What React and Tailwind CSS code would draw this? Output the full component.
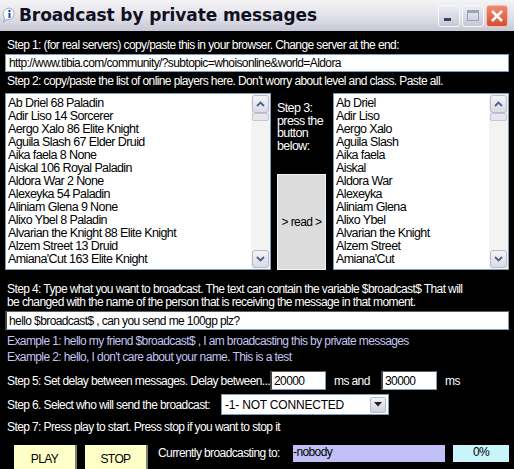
const left = [
  'Ab Driel 68 Paladin',
  'Adir Liso 14 Sorcerer',
  'Aergo Xalo 86 Elite Knight',
  'Aguila Slash 67 Elder Druid',
  'Aika faela 8 None',
  'Aiskal 106 Royal Paladin',
  'Aldora War 2 None',
  'Alexeyka 54 Paladin',
  'Aliniam Glena 9 None',
  'Alixo Ybel 8 Paladin',
  'Alvarian the Knight 88 Elite Knight',
  'Alzem Street 13 Druid',
  "Amiana'Cut 163 Elite Knight",
];

const right = [
  'Ab Driel',
  'Adir Liso',
  'Aergo Xalo',
  'Aguila Slash',
  'Aika faela',
  'Aiskal',
  'Aldora War',
  'Alexeyka',
  'Aliniam Glena',
  'Alixo Ybel',
  'Alvarian the Knight',
  'Alzem Street',
  "Amiana'Cut",
];

const font = "font-['Liberation_Sans',Arial,sans-serif]";

const Arrow = ({ down }) => (
  <svg width="9" height="6" viewBox="0 0 9 6">
    <path
      d={down ? 'M1 1 L4.5 4.5 L8 1' : 'M1 5 L4.5 1.5 L8 5'}
      fill="none"
      stroke="#4d6185"
      strokeWidth="1.8"
    />
  </svg>
);

const ScrollBar = () => (
  <div className="flex flex-col w-[19px] h-full bg-[#f3f3f1] p-[1px]">
    <div className="h-[18px] rounded-[3px] border border-[#b8bccc] bg-gradient-to-b from-[#f4f4f8] to-[#d8dae6] flex items-center justify-center">
      <Arrow />
    </div>
    <div className="h-[8px] rounded-[2px] border border-[#c2c6d4] bg-[#e6e7ee]"></div>
    <div className="flex-1"></div>
    <div className="h-[18px] rounded-[3px] border border-[#b8bccc] bg-gradient-to-b from-[#f4f4f8] to-[#d8dae6] flex items-center justify-center">
      <Arrow down />
    </div>
  </div>
);

const List = ({ items, className }) => (
  <div className={`flex bg-white border border-[#7f9db9] h-[177px] ${className}`}>
    <div className="flex-1 pl-[2px] pt-[3px] text-[12.5px] tracking-[-0.6px] leading-[13px] text-black overflow-hidden">
      {items.map((t) => (
        <div key={t} className="whitespace-nowrap">{t}</div>
      ))}
    </div>
    <ScrollBar />
  </div>
);

const WinBtn = ({ children, red }) => (
  <div
    className={`w-[22px] h-[22px] rounded-[3px] border flex items-center justify-center ${
      red
        ? 'border-[#f4c0b0] bg-gradient-to-b from-[#f08a70] to-[#d44c34]'
        : 'border-[#f8f8fc] bg-gradient-to-b from-[#eceef4] to-[#c6c8d6]'
    }`}
  >
    {children}
  </div>
);

const Field = ({ children, className = '' }) => (
  <div className={`h-[19px] bg-white border border-[#7f9db9] border-l-[2px] border-l-[#404040] border-t-[#606060] text-black pl-[2px] leading-[18px] whitespace-nowrap ${className}`}>
    {children}
  </div>
);

export default function App() {
  return (
    <div className={`w-[514px] h-[469px] bg-black overflow-hidden ${font} text-[12px] tracking-[-0.6px] text-white`}>
      {/* Title bar */}
      <div className="h-[31px] flex items-center bg-gradient-to-b from-[#f4f4f6] via-[#e2e2ea] to-[#c8c8d6] px-[2px] tracking-normal">
        <svg width="15" height="16" viewBox="0 0 15 16" className="mr-[2px] mb-[2px]">
          <path d="M7.5 1 A6.3 6 0 1 1 4 12.6 L1.5 15 L2.6 11 A6.3 6 0 0 1 7.5 1 Z" fill="#fff" stroke="#8a96b0" strokeWidth="0.8" />
          <circle cx="7.5" cy="4" r="1.2" fill="#1d49c4" />
          <rect x="6.5" y="6" width="2" height="5" fill="#1d49c4" />
        </svg>
        <div className="font-['DejaVu_Sans',sans-serif] font-bold text-[17px] text-[#101020] tracking-[-0.1px]">
          Broadcast by private messages
        </div>
        <div className="ml-auto flex gap-[2px] mr-[4px]">
          <WinBtn>
            <div className="w-[7px] h-[3px] bg-[#3c4260] mt-[8px] mr-[4px]"></div>
          </WinBtn>
          <WinBtn>
            <div className="w-[12px] h-[11px] border border-[#9da2b4] border-t-[3px]"></div>
          </WinBtn>
          <WinBtn red>
            <svg width="14" height="14" viewBox="0 0 14 14">
              <path d="M2 2 L12 12 M12 2 L2 12" stroke="#fff" strokeWidth="2.6" />
            </svg>
          </WinBtn>
        </div>
      </div>

      <div className="px-[5px]">
        <div className="pl-[2px] mt-[7px] leading-[15px] whitespace-nowrap">
          Step 1: (for real servers) copy/paste this in your browser. Change server at the end:
        </div>
        <div className="mt-[1px] h-[18px] bg-white border border-[#7f9db9] text-black pl-[3px] leading-[16px] whitespace-nowrap">
          http://www.tibia.com/community/?subtopic=whoisonline&amp;world=Aldora
        </div>
        <div className="pl-[2px] mt-[2px] leading-[15px] whitespace-nowrap">
          Step 2: copy/paste the list of online players here. Don't worry about level and class. Paste all.
        </div>

        <div className="flex mt-[4px]">
          <List items={left} className="w-[266px]" />
          <div className="w-[62px] flex flex-col pl-[6px]">
            <div className="pt-[9px] leading-[12.5px] whitespace-nowrap text-[12.5px]">
              Step 3:<br />press the<br />button<br />below:
            </div>
            <div className="mt-auto h-[96px] w-[49px] bg-[#dcdcdc] border border-[#f4f4f4] text-black flex items-center justify-center whitespace-nowrap">
              &gt; read &gt;
            </div>
          </div>
          <List items={right} className="flex-1" />
        </div>

        <div className="pl-[2px] mt-[13px] leading-[13px] whitespace-nowrap">
          Step 4: Type what you want to broadcast. The text can contain the variable $broadcast$ That will
          <br />
          be changed with the name of the person that is receiving the message in that moment.
        </div>
        <Field className="mt-[2px]">hello $broadcast$ , can you send me 100gp plz?</Field>
        <div className="pl-[2px] mt-[4px] leading-[15px] text-[#c4c4f0] whitespace-nowrap">
          Example 1: hello my friend $broadcast$ , I am broadcasting this by private messages
        </div>
        <div className="pl-[2px] mt-[1px] leading-[15px] text-[#c4c4f0] whitespace-nowrap">
          Example 2: hello, I don't care about your name. This is a test
        </div>

        <div className="flex items-center mt-[6px] h-[19px] whitespace-nowrap">
          <div className="pl-[2px] w-[265px]">Step 5: Set delay between messages. Delay between...</div>
          <Field className="w-[56px]">20000</Field>
          <div className="ml-[8px] w-[47px]">ms and</div>
          <Field className="w-[56px]">30000</Field>
          <div className="ml-[8px]">ms</div>
        </div>

        <div className="flex items-center mt-[4px] h-[21px] whitespace-nowrap">
          <div className="pl-[2px] w-[216px]">Step 6. Select who will send the broadcast:</div>
          <div className="w-[168px] h-[21px] bg-white border border-[#7f9db9] flex items-center text-black pl-[3px]">
            <span className="flex-1 tracking-[-0.2px]">-1- NOT CONNECTED</span>
            <div className="w-[16px] h-[16px] mr-[2px] rounded-[2px] border border-[#b8bccc] bg-gradient-to-b from-[#f4f4f8] to-[#d0d2de] flex items-center justify-center">
              <svg width="8" height="5" viewBox="0 0 8 5">
                <path d="M0 0 L8 0 L4 4.5 Z" fill="#202020" />
              </svg>
            </div>
          </div>
        </div>

        <div className="pl-[2px] mt-[5px] leading-[15px] whitespace-nowrap">
          Step 7: Press play to start. Press stop if you want to stop it
        </div>

        <div className="flex items-start mt-[10px] whitespace-nowrap">
          <div className="ml-[9px] w-[63px] h-[26px] bg-[#ffffc8] border-r-[2px] border-r-[#808070] text-black flex items-center justify-center pt-[2px]">
            PLAY
          </div>
          <div className="ml-[8px] w-[63px] h-[26px] bg-[#ffffc8] border-r-[2px] border-r-[#808070] text-black flex items-center justify-center pt-[2px]">
            STOP
          </div>
          <div className="ml-[10px] w-[135px] leading-[15px] mt-[1px]">Currently broadcasting to:</div>
          <div className="w-[152px] h-[17px] bg-[#c0c0f6] text-black leading-[15px]">-nobody</div>
          <div className="ml-[8px] w-[56px] h-[17px] bg-[#c8f4fa] text-black leading-[15px] text-center">0%</div>
        </div>
      </div>
    </div>
  );
}
